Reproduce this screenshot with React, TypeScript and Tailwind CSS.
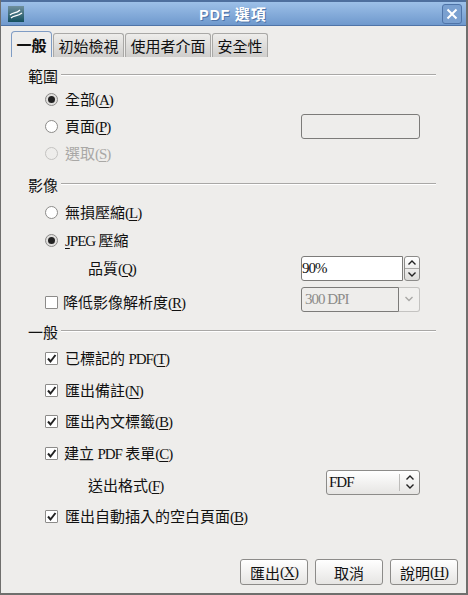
import React from "react";

const latin = "text-[15px] tracking-[-1px] font-['Liberation_Serif',serif]";

function L({ children }: { children: React.ReactNode }) {
  return <span className={latin}>{children}</span>;
}

function Mnemonic({ k }: { k: string }) {
  return (
    <span className={latin}>
      (<span className="underline underline-offset-2">{k}</span>)
    </span>
  );
}

function Radio({ checked, disabled }: { checked?: boolean; disabled?: boolean }) {
  return (
    <span
      className={`flex h-[13px] w-[13px] shrink-0 items-center justify-center rounded-full border ${
        disabled ? "border-[#c4c3c1] bg-[#eeedeb]" : checked ? "border-[#8c8b89] bg-[#e0dfdd]" : "border-[#8c8b89] bg-white"
      }`}
    >
      {checked && <span className="h-[7px] w-[7px] rounded-full bg-[#222]" />}
    </span>
  );
}

function Check({ checked }: { checked?: boolean }) {
  return (
    <span className="flex h-[13px] w-[13px] shrink-0 items-center justify-center rounded-[1px] border border-[#8c8b89] bg-white">
      {checked && (
        <svg width="11" height="11" viewBox="0 0 11 11">
          <path d="M2 5.5 L4.5 8.5 L9.5 2" fill="none" stroke="#222" strokeWidth="2" />
        </svg>
      )}
    </span>
  );
}

function SectionHead({ title }: { title: string }) {
  return (
    <div className="flex h-5 items-center gap-[3px] pr-[30px]">
      <span className="w-[30px] shrink-0">{title}</span>
      <div className="h-[2px] flex-1 border-t border-b border-t-[#a9a8a6] border-b-white" />
    </div>
  );
}

function Row({ className, children }: { className: string; children: React.ReactNode }) {
  return <div className={`flex items-center pl-[17px] pr-[46px] ${className}`}>{children}</div>;
}

function ChevronUp() {
  return (
    <svg width="10" height="7" viewBox="0 0 10 7">
      <path d="M1.5 5.5 L5 2 L8.5 5.5" fill="none" stroke="#222" strokeWidth="1.4" />
    </svg>
  );
}

function ChevronDown() {
  return (
    <svg width="10" height="7" viewBox="0 0 10 7">
      <path d="M1.5 1.5 L5 5 L8.5 1.5" fill="none" stroke="#222" strokeWidth="1.4" />
    </svg>
  );
}

function Button({ children, className }: { children: React.ReactNode; className: string }) {
  return (
    <button className={`flex h-[26px] items-center justify-center rounded-[3px] border border-[#8c8b89] bg-gradient-to-b from-white to-[#e6e5e3] ${className}`}>
      {children}
    </button>
  );
}

const tabs = [
  { label: "初始檢視", width: "w-[71px]" },
  { label: "使用者介面", width: "w-[86px]" },
  { label: "安全性", width: "w-[56px]" },
];

export default function App() {
  return (
    <div className="flex h-[595px] w-[468px] flex-col overflow-hidden border-r-2 border-b-2 border-l border-[#6f6f6d] bg-[#eeedeb] font-['Noto_Sans_CJK_TC',sans-serif] text-[15px] leading-none text-[#111]">
      <div className="flex h-[26px] shrink-0 items-center border-t-2 border-b border-t-[#4e6f9e] border-b-[#4f74a8] bg-gradient-to-b from-[#9dc0e8] to-[#6f99cd] pr-[4px] pl-[7px]">
        <svg width="16" height="16" viewBox="0 0 16 16" className="shrink-0">
          <defs>
            <linearGradient id="logo" x1="0" y1="0" x2="0" y2="1">
              <stop offset="0" stopColor="#6f8f9c" />
              <stop offset="1" stopColor="#14505f" />
            </linearGradient>
          </defs>
          <rect width="16" height="16" fill="url(#logo)" />
          <path d="M2 9 C5 6 8 8 12 4" fill="none" stroke="#fff" strokeWidth="1.3" />
          <path d="M3 12 C6 9 9 11 14 7" fill="none" stroke="#fff" strokeWidth="1.3" />
        </svg>
        <div className="flex-1 text-center text-[15px] font-bold tracking-[1px] text-white [text-shadow:1px_1px_0_#4f74a8]">
          <span className="font-['Liberation_Sans',sans-serif] text-[14px]">PDF</span> 選項
        </div>
        <span className="flex h-5 w-5 items-center justify-center rounded-[3px] border border-[#4f74a8] bg-[#7aa0d0]">
          <svg width="12" height="12" viewBox="0 0 12 12">
            <path d="M1.5 1.5 L10.5 10.5 M10.5 1.5 L1.5 10.5" stroke="#fff" strokeWidth="2" />
          </svg>
        </span>
      </div>

      <div className="flex h-[31px] shrink-0 items-end pl-[10px]">
        <div className="flex h-[26px] w-[41px] items-center justify-center rounded-t-[4px] border border-b-0 border-[#7f9cc4] bg-[#eeedeb] font-bold">
          一般
        </div>
        {tabs.map((tab) => (
          <div
            key={tab.label}
            className={`ml-px flex h-[24px] items-center justify-center rounded-t-[3px] border border-b-0 border-[#a9a8a6] bg-gradient-to-b from-[#eeedeb] to-[#cfcecc] ${tab.width}`}
          >
            {tab.label}
          </div>
        ))}
      </div>

      <div className="flex flex-1 flex-col pt-2 pl-[27px]">
        <SectionHead title="範圍" />
        <Row className="mt-[1px] h-[27px] gap-[7px]">
          <Radio checked />
          <span>全部<Mnemonic k="A" /></span>
        </Row>
        <Row className="h-[27px] gap-[7px]">
          <Radio />
          <span>頁面<Mnemonic k="P" /></span>
          <div className="ml-auto h-[25px] w-[119px] rounded-[3px] border border-[#7c7b79]" />
        </Row>
        <Row className="h-[27px] gap-[7px] text-[#a9a8a6]">
          <Radio disabled />
          <span>選取<Mnemonic k="S" /></span>
        </Row>

        <div className="mt-[7px]">
          <SectionHead title="影像" />
        </div>
        <Row className="mt-[4px] h-[28px] gap-[7px]">
          <Radio />
          <span>無損壓縮<Mnemonic k="L" /></span>
        </Row>
        <Row className="h-[28px] gap-[7px]">
          <Radio checked />
          <span><span className={latin}><span className="underline underline-offset-2">J</span>PEG</span> 壓縮</span>
        </Row>
        <Row className="h-[28px]">
          <span className="pl-[43px]">品質<Mnemonic k="Q" /></span>
          <div className="ml-auto flex h-[25px] w-[119px] gap-px">
            <div className={`flex flex-1 items-center rounded-l-[3px] border border-[#7c7b79] bg-white ${latin}`}>90%</div>
            <div className="flex w-[16px] flex-col rounded-[3px] border border-[#8c8b89] bg-gradient-to-b from-white to-[#dcdbd9]">
              <div className="flex flex-1 items-center justify-center border-b border-[#a9a8a6]"><ChevronUp /></div>
              <div className="flex flex-1 items-center justify-center"><ChevronDown /></div>
            </div>
          </div>
        </Row>
        <Row className="mt-[6px] h-[28px] gap-[5px]">
          <Check />
          <span>降低影像解析度<Mnemonic k="R" /></span>
          <div className="ml-auto -mt-[6px] flex h-[25px] w-[119px]">
            <div className={`flex flex-1 items-center rounded-l-[3px] border border-[#7c7b79] pl-[3px] text-[#8c8b89] ${latin}`}>300 DPI</div>
            <div className="flex w-[21px] items-center justify-center rounded-r-[3px] border border-l-0 border-[#c4c3c1] bg-[#f1f0ee]">
              <svg width="10" height="6" viewBox="0 0 10 6">
                <path d="M1.5 1 L5 4.5 L8.5 1" fill="none" stroke="#a9a8a6" strokeWidth="1.4" />
              </svg>
            </div>
          </div>
        </Row>

        <div className="mt-[5px]">
          <SectionHead title="一般" />
        </div>
        <Row className="mt-[2px] h-[31px] gap-[7px]">
          <Check checked />
          <span>已標記的 <L>PDF</L><Mnemonic k="T" /></span>
        </Row>
        <Row className="h-[32px] gap-[7px]">
          <Check checked />
          <span>匯出備註<Mnemonic k="N" /></span>
        </Row>
        <Row className="h-[31px] gap-[7px]">
          <Check checked />
          <span>匯出內文標籤<Mnemonic k="B" /></span>
        </Row>
        <Row className="h-[32px] gap-[6px]">
          <Check checked />
          <span>建立 <L>PDF</L> 表單<Mnemonic k="C" /></span>
        </Row>
        <Row className="h-[32px]">
          <span className="pl-[43px]">送出格式<Mnemonic k="F" /></span>
          <div className="ml-auto -mt-[6px] flex h-[25px] w-[94px] items-center rounded-[3px] border border-[#8c8b89] bg-gradient-to-b from-white to-[#e6e5e3]">
            <span className={`flex-1 pl-[2px] ${latin}`}>FDF</span>
            <div className="flex h-[17px] w-[20px] flex-col items-center justify-center gap-[2px] border-l border-[#bdbcba]">
              <ChevronUp />
              <ChevronDown />
            </div>
          </div>
        </Row>
        <Row className="h-[31px] gap-[7px]">
          <Check checked />
          <span>匯出自動插入的空白頁面<Mnemonic k="B" /></span>
        </Row>

        <div className="mt-auto flex justify-end gap-[7px] pr-[8px] pb-[8px]">
          <Button className="w-[68px]">匯出<Mnemonic k="X" /></Button>
          <Button className="w-[68px]">取消</Button>
          <Button className="w-[68px]">說明<Mnemonic k="H" /></Button>
        </div>
      </div>
    </div>
  );
}
